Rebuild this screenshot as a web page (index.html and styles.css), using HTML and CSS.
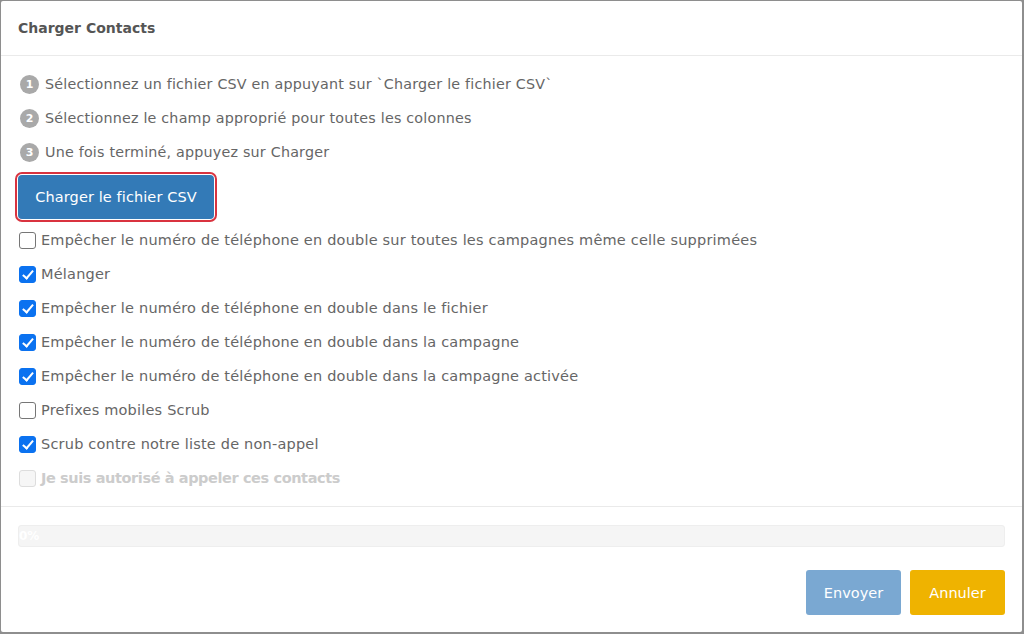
FILE: index.html
```html
<!DOCTYPE html>
<html lang="fr">
<head>
<meta charset="utf-8">
<link rel="stylesheet" href="styles.css">
</head>
<body>
<div class="modal">
  <div class="modal-header">Charger Contacts</div>
  <div class="modal-body">
    <div class="step"><span class="num">1</span>Sélectionnez un fichier CSV en appuyant sur `Charger le fichier CSV`</div>
    <div class="step"><span class="num">2</span>Sélectionnez le champ approprié pour toutes les colonnes</div>
    <div class="step"><span class="num">3</span>Une fois terminé, appuyez sur Charger</div>
    <div class="upload-wrap"><button class="btn-upload">Charger le fichier CSV</button></div>
    <label class="check"><span class="box"></span>Empêcher le numéro de téléphone en double sur toutes les campagnes même celle supprimées</label>
    <label class="check"><span class="box on"></span>Mélanger</label>
    <label class="check"><span class="box on"></span>Empêcher le numéro de téléphone en double dans le fichier</label>
    <label class="check"><span class="box on"></span>Empêcher le numéro de téléphone en double dans la campagne</label>
    <label class="check"><span class="box on"></span>Empêcher le numéro de téléphone en double dans la campagne activée</label>
    <label class="check"><span class="box"></span>Prefixes mobiles Scrub</label>
    <label class="check"><span class="box on"></span>Scrub contre notre liste de non-appel</label>
    <label class="check disabled"><span class="box"></span>Je suis autorisé à appeler ces contacts</label>
  </div>
  <div class="progress-area">
    <div class="progress"><span class="progress-text">0%</span></div>
  </div>
  <div class="modal-footer">
    <button class="btn btn-send">Envoyer</button>
    <button class="btn btn-cancel">Annuler</button>
  </div>
</div>
</body>
</html>
```
FILE: styles.css
```css
html, body { margin: 0; padding: 0; }
body {
  width: 1024px;
  height: 634px;
  background: #8e8e8e;
  font-family: "DejaVu Sans", "Noto Sans", sans-serif;
  overflow: hidden;
}
.modal {
  box-sizing: border-box;
  margin: 1px 2px 0 1px;
  width: 1021px;
  height: 631px;
  background: #fff;
  border-radius: 2px;
  display: flex;
  flex-direction: column;
}
.modal-header {
  height: 55px;
  box-sizing: border-box;
  padding: 19px 17px 0;
  font-size: 14px;
  font-weight: bold;
  color: #555;
  border-bottom: 1px solid #eaeaea;
}
.modal-body {
  padding: 11px 17px 0;
  display: flex;
  flex-direction: column;
}
.step {
  display: flex;
  align-items: center;
  height: 34px;
  font-size: 14.3px;
  letter-spacing: 0.2px;
  color: #666;
}
.num {
  width: 19px;
  height: 19px;
  border-radius: 50%;
  background: #a9a9a9;
  color: #fff;
  font-size: 11px;
  font-weight: bold;
  display: flex;
  align-items: center;
  justify-content: center;
  margin: 0 6px 0 2px;
  letter-spacing: 0;
}
.upload-wrap {
  margin-top: 3px;
  align-self: flex-start;
  border: 2px solid #d9333f;
  border-radius: 7px;
  padding: 1px;
  margin-left: -3px;
}
.btn-upload {
  display: block;
  width: 196px;
  height: 44px;
  background: #337ab7;
  color: #fff;
  border: none;
  border-radius: 4px;
  font-family: inherit;
  font-size: 14.5px;
  letter-spacing: 0.1px;
}
.check {
  display: flex;
  align-items: center;
  height: 34px;
  font-size: 14.5px;
  letter-spacing: 0.2px;
  color: #666;
}
.upload-wrap + .check { margin-top: 1px; }
.box {
  box-sizing: border-box;
  width: 17px;
  height: 17px;
  border: 1px solid #767676;
  border-radius: 3px;
  margin: 0 5px 0 1px;
  flex: none;
  position: relative;
}
.box.on {
  background: #0b72f0;
  border-color: #0b72f0;
}
.box.on::after {
  content: "";
  position: absolute;
  left: 5px;
  top: 1px;
  width: 4px;
  height: 9px;
  border: solid #fff;
  border-width: 0 2.5px 2.5px 0;
  transform: rotate(40deg);
}
.check.disabled { color: #ccc; font-weight: bold; letter-spacing: -0.4px; }
.check.disabled .box { border-color: #ddd; background: #f6f6f6; }
.progress-area {
  margin-top: 11px;
  border-top: 1px solid #eaeaea;
  padding: 18px 17px 0;
}
.progress {
  height: 22px;
  background: #f5f5f5;
  border-radius: 3px;
  border: 1px solid #eee;
  box-sizing: border-box;
  display: flex;
  align-items: center;
}
.progress-text {
  color: #fff;
  font-size: 12px;
  font-weight: bold;
}
.modal-footer {
  display: flex;
  justify-content: flex-end;
  gap: 9px;
  padding: 23px 17px 0;
}
.btn {
  width: 95px;
  height: 45px;
  border: none;
  border-radius: 3px;
  color: #fff;
  font-family: inherit;
  font-size: 14.5px;
}
.btn-send { background: #7aa8d2; }
.btn-cancel { background: #efb300; }
```
